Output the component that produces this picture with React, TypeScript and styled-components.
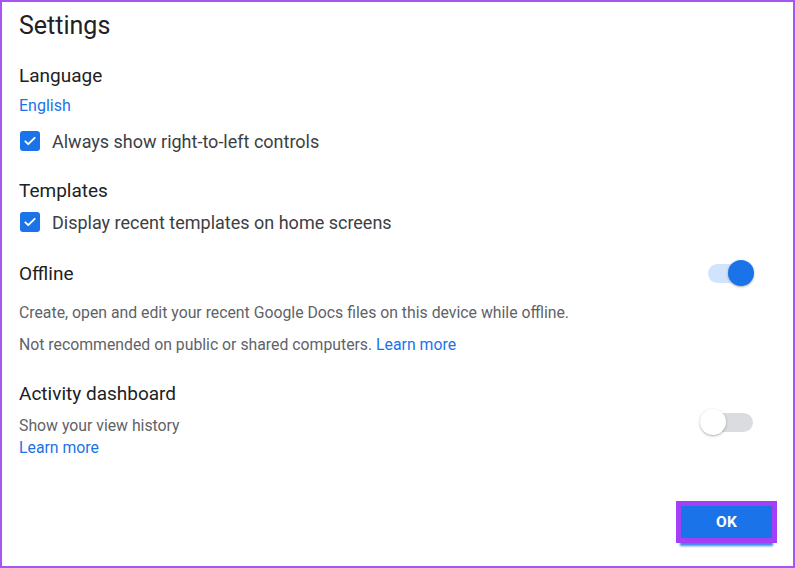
import React from "react";
import styled, { createGlobalStyle } from "styled-components";

const Global = createGlobalStyle`
  html, body { margin: 0; padding: 0; background: #fff; }
  body { font-family: Roboto, "Liberation Sans", Arial, sans-serif; }
  * { box-sizing: border-box; }
`;

const Dialog = styled.div`
  width: 795px;
  height: 568px;
  border: 2px solid #a855f7;
  background: #fff;
  display: flex;
  flex-direction: column;
  padding: 9px 39px 0 17px;
  color: #202124;
`;

const Title = styled.h1`
  margin: 0;
  font-size: 25px;
  line-height: 30px;
  font-weight: 400;
  color: #202124;
`;

const Heading = styled.div<{ $mt: number }>`
  margin-top: ${(p) => p.$mt}px;
  font-size: 19px;
  line-height: 24px;
  color: #202124;
`;

const HeadRow = styled.div<{ $mt: number }>`
  margin-top: ${(p) => p.$mt}px;
  display: flex;
  align-items: center;
  justify-content: space-between;
  height: 26px;
  font-size: 19px;
  color: #202124;
`;

const Link = styled.a<{ $mt?: number }>`
  display: block;
  margin-top: ${(p) => p.$mt ?? 0}px;
  color: #1a73e8;
  font-size: 16px;
  line-height: 20px;
  text-decoration: none;
`;

const BlockLink = styled.a`
  display: block;
  color: #1a73e8;
  text-decoration: none;
`;

const InlineLink = styled.a`
  color: #1a73e8;
  text-decoration: none;
`;

const CheckRow = styled.label<{ $mt: number }>`
  margin-top: ${(p) => p.$mt}px;
  display: flex;
  align-items: center;
  gap: 12px;
  height: 24px;
  padding-left: 1px;
  font-size: 18px;
  color: #3c4043;
`;

const Box = styled.span`
  width: 20px;
  height: 20px;
  border-radius: 3px;
  background: #1a73e8;
  display: flex;
  align-items: center;
  justify-content: center;
`;

const Text = styled.div<{ $mt: number }>`
  margin-top: ${(p) => p.$mt}px;
  font-size: 15.8px;
  line-height: 20px;
  color: #5f6368;
`;

const ActivityRow = styled.div`
  margin-top: 9px;
  display: flex;
  justify-content: space-between;
  align-items: flex-start;
`;

const ActivityText = styled.div`
  font-size: 15.8px;
  line-height: 22px;
  color: #5f6368;
`;

const SwitchWrap = styled.span<{ $offsetTop?: number }>`
  position: relative;
  display: inline-block;
  width: 54px;
  height: 27px;
  margin-top: ${(p) => p.$offsetTop ?? 0}px;
`;

const Track = styled.span<{ $on: boolean }>`
  position: absolute;
  top: 4px;
  left: ${(p) => (p.$on ? 8 : 13)}px;
  width: 40px;
  height: 19px;
  border-radius: 10px;
  background: ${(p) => (p.$on ? "#d2e3fc" : "#dadce0")};
`;

const Knob = styled.span<{ $on: boolean }>`
  position: absolute;
  top: 0;
  left: ${(p) => (p.$on ? 28 : 0)}px;
  width: 26px;
  height: 26px;
  border-radius: 50%;
  background: ${(p) => (p.$on ? "#1a73e8" : "#fff")};
  box-shadow: 0 1px 3px rgba(60, 64, 67, 0.3), 0 1px 1px rgba(60, 64, 67, 0.15);
`;

const Footer = styled.div`
  margin-top: auto;
  margin-right: -23px;
  margin-bottom: 23px;
  display: flex;
  justify-content: flex-end;
`;

const OkButton = styled.button`
  width: 101px;
  height: 42px;
  border: 5px solid #a33ff5;
  background: #1a73e8;
  color: #fff;
  font-family: Roboto, "Liberation Sans", Arial, sans-serif;
  font-weight: 700;
  font-size: 15.5px;
  letter-spacing: 0.2px;
  box-shadow: 0 7px 2px -4px rgba(26, 115, 232, 0.85);
  padding: 0;
`;

function Check() {
  return (
    <Box>
      <svg width="14" height="14" viewBox="0 0 24 24">
        <path d="M4 12.5l5 5L20 6.5" fill="none" stroke="#fff" strokeWidth="3.2" strokeLinecap="round" strokeLinejoin="round" />
      </svg>
    </Box>
  );
}

function Switch({ on, offsetTop }: { on: boolean; offsetTop?: number }) {
  return (
    <SwitchWrap $offsetTop={offsetTop}>
      <Track $on={on} />
      <Knob $on={on} />
    </SwitchWrap>
  );
}

export default function App() {
  return (
    <>
      <Global />
      <Dialog>
        <Title>Settings</Title>
        <Heading $mt={23}>Language</Heading>
        <Link $mt={8}>English</Link>
        <CheckRow $mt={13}>
          <Check />
          Always show right-to-left controls
        </CheckRow>
        <Heading $mt={26}>Templates</Heading>
        <CheckRow $mt={7}>
          <Check />
          Display recent templates on home screens
        </CheckRow>
        <HeadRow $mt={26}>
          <span>Offline</span>
          <Switch on />
        </HeadRow>
        <Text $mt={17}>Create, open and edit your recent Google Docs files on this device while offline.</Text>
        <Text $mt={12}>
          Not recommended on public or shared computers. <InlineLink>Learn more</InlineLink>
        </Text>
        <Heading $mt={27}>Activity dashboard</Heading>
        <ActivityRow>
          <ActivityText>
            Show your view history
            <BlockLink>Learn more</BlockLink>
          </ActivityText>
          <Switch on={false} offsetTop={-6} />
        </ActivityRow>
        <Footer>
          <OkButton>OK</OkButton>
        </Footer>
      </Dialog>
    </>
  );
}
